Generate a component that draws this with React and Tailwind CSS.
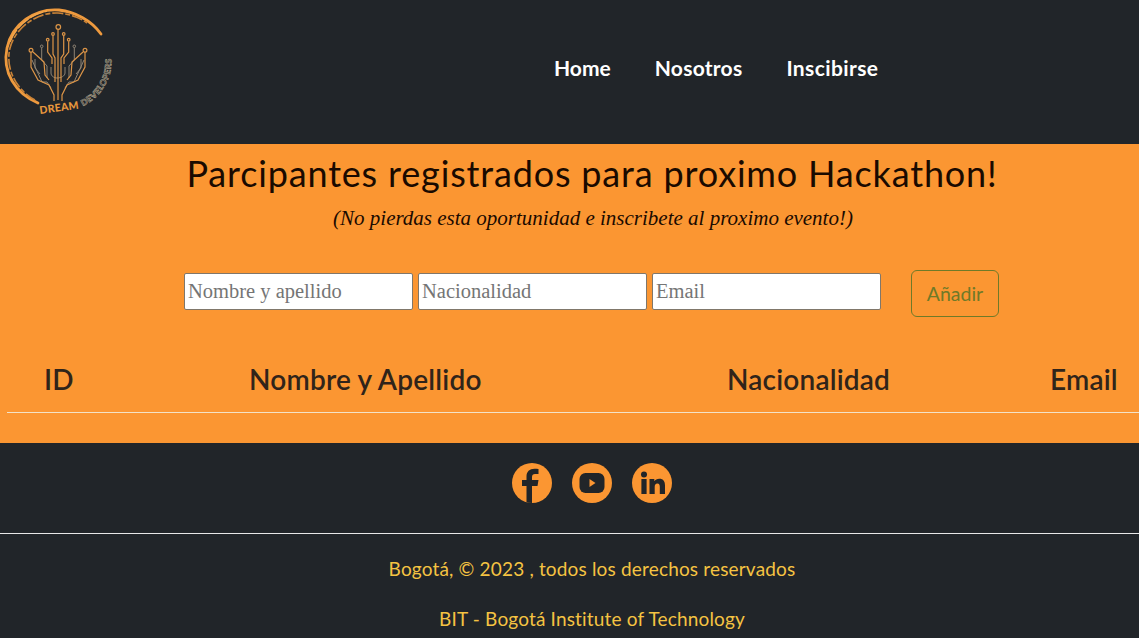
const F = "font-['Lato','Noto_Sans',sans-serif]";

function Logo() {
  return (
    <svg width="124" height="124" viewBox="0 0 124 124" fill="none" className="block">
      <path d="M37 101 C14 91 1 70 6 46 C11 22 34 6 58 8 C74 10 90 18 100 32" stroke="#ee9a3e" strokeWidth="2.800" strokeLinecap="round" />
      <path d="M34 98 C15 88 4 66 9 46 C14 26 36 10 57 11 C68 12 78 15 86 21" stroke="#c98236" strokeWidth="1.600" strokeDasharray="11 2 5 2" />
      <path d="M9 40 C15 24 30 12 46 9" stroke="#f2a54a" strokeWidth="1.500" strokeDasharray="14 2" />
      <g stroke="#8f8474" strokeWidth="1" fill="none">
        <circle cx="40.700" cy="44.300" r="1.300" />
        <circle cx="73.300" cy="44.300" r="1.300" />
        <path d="M40.700 46 V58 L46 64 V76 M73.300 46 V58 L68 64 V76" />
        <path d="M50 65 V71 C50 74 53 76 56 76 C60 76 64 74 64 71 V65" />
        <path d="M31 58 L41 80 H46 L50 86 M83 58 L73 80 H68 L64 86" />
        <path d="M34 57 V66 L39 72 M80 57 V66 L75 72" />
      </g>
      <g stroke="#dc9547" strokeWidth="1.200" fill="none">
        <circle cx="57.300" cy="25" r="2.300" />
        <path d="M57 27.500 V98" />
        <circle cx="52" cy="32" r="1.300" />
        <circle cx="62.700" cy="32" r="1.300" />
        <circle cx="46.700" cy="37.700" r="1.300" />
        <circle cx="67.700" cy="37.700" r="1.300" />
        <circle cx="30" cy="48.300" r="1.900" />
        <circle cx="84" cy="48.300" r="1.900" />
        <path d="M52 33.500 V52 L54 56 V80 M62.700 33.500 V52 L60 56 V80" />
        <path d="M46.700 39.200 V50 L51 56 V62 M67.700 39.200 V50 L63 56 V62" />
        <path d="M30 50 V65 L37 78 L48 83 L53 93 V99 M84 50 V65 L77 78 L66 83 L61 93 V99" />
        <path d="M32 50 L43 60 L44 73 L48 78 M82 50 L71 60 L70 73 L66 78" />
      </g>
      <text x="39" y="112" transform="rotate(-8 39 112)" fill="#e8963c" fontSize="10.500" fontWeight="900" fontFamily="Lato, sans-serif" letterSpacing="0.300">DREAM</text>
      <path id="devArc" d="M82 104 A 50 50 0 0 0 105 36" />
      <text fill="#3a3a38" stroke="#b8ac94" strokeWidth="0.500" fontSize="8.500" fontWeight="900" fontFamily="Lato, sans-serif" letterSpacing="0.500">
        <textPath href="#devArc">DEVELOPERS</textPath>
      </text>
    </svg>
  );
}

function Social({ children }) {
  return (
    <a className="block w-10 h-10 rounded-full bg-[#fb9632] overflow-hidden">
      <svg viewBox="0 0 40 40" width="40" height="40">{children}</svg>
    </a>
  );
}

export default function App() {
  const input = "w-[229px] h-[37px] mt-[3px] bg-white border border-[#80776a] rounded-[2px] px-[3px] text-[20.5px] text-black placeholder:text-[#757575] font-['Liberation_Serif',serif] outline-none";
  return (
    <div className={`${F} w-full h-[638px] overflow-hidden bg-[#212529]`}>
      <header className="h-[144px] bg-[#212529] flex">
        <div className="w-[554px] pl-[1px] pt-[2px] shrink-0"><Logo /></div>
        <nav className="flex gap-[44px] pt-[54px] text-[21px] leading-[28px] font-bold text-white">
          <a>Home</a>
          <a className="tracking-[0.25px]">Nosotros</a>
          <a className="tracking-[0.4px]">Inscibirse</a>
        </nav>
      </header>

      <main className="h-[299px] bg-[#fb9632] flex flex-col">
        <h1 className="text-center text-[36px] leading-[43px] text-[#1a0a00] pt-[8px] h-[51px] pl-[45px] tracking-[0.83px]">Parcipantes registrados para proximo Hackathon!</h1>
        <p className="text-center text-[21px] leading-[26px] italic text-[#1a0a00] mt-[10px] pl-[47px] font-['Liberation_Serif',serif]">(No pierdas esta oportunidad e inscribete al proximo evento!)</p>
        <div className="flex items-start ml-[184px] mt-[39px] gap-[5px]">
          <input className={input} placeholder="Nombre y apellido" />
          <input className={input} placeholder="Nacionalidad" />
          <input className={input} placeholder="Email" />
          <button className="ml-[25px] w-[88px] h-[47px] rounded-[6px] border border-[#6f7a28] text-[#6f7a28] text-[19.5px]">Añadir</button>
        </div>
        <div className="ml-[7px] mt-[37px] h-[59px] border-b border-[#f3e3c8] flex items-start pt-[7px] text-[28px] leading-[36px] font-semibold text-[#30241a] tracking-[0.2px]">
          <span className="ml-[37px] w-[205px]">ID</span>
          <span className="w-[478px]">Nombre y Apellido</span>
          <span className="w-[323px]">Nacionalidad</span>
          <span>Email</span>
        </div>
      </main>

      <footer className="h-[195px] bg-[#212529]">
        <div className="h-[91px] border-b border-[#e8e8e8] flex justify-center gap-[20px] pt-[20px] pl-[45px]">
          <Social>
            <path d="M20 40 V23 H25.500 L26.500 17 H20 V14 C20 12 21 11 23 11 H26.500 V6 C25 5.800 23.500 5.700 22.500 5.700 C17.500 5.700 14.500 8.500 14.500 13.500 V17 H10 V23 H14.500 V40 Z" fill="#212529" />
          </Social>
          <Social>
            <rect x="7.500" y="10" width="25" height="20" rx="6" fill="#212529" />
            <path d="M17.500 16 L23.500 20 L17.500 24 Z" fill="#fb9632" />
          </Social>
          <Social>
            <circle cx="12" cy="11.500" r="3" fill="#212529" />
            <rect x="9.400" y="16" width="5.200" height="15" fill="#212529" />
            <path d="M17.500 16 H22.300 V18.300 C23.300 16.800 25 15.800 27.300 15.800 C31.500 15.800 33 18.500 33 22.800 V31 H27.800 V23.800 C27.800 21.800 27.200 20.400 25.400 20.400 C23.500 20.400 22.700 21.800 22.700 23.800 V31 H17.500 Z" fill="#212529" />
          </Social>
        </div>
        <div className="text-center text-[#f5c342] text-[19px] leading-[26px] tracking-[0.17px] pl-[45px]">
          <p className="pt-[22px]">Bogotá, © 2023 , todos los derechos reservados</p>
          <p className="mt-[24px]">BIT - Bogotá Institute of Technology</p>
        </div>
      </footer>
    </div>
  );
}
